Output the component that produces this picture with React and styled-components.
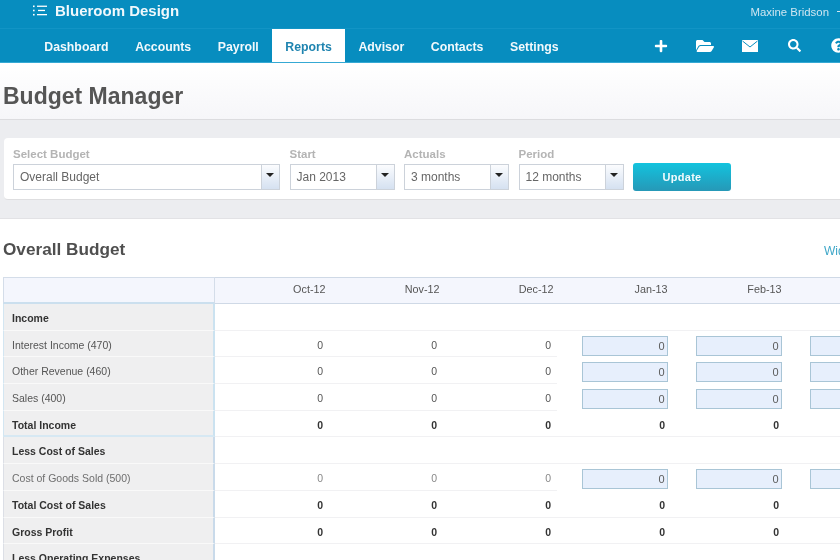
import React from 'react';
import styled, { createGlobalStyle } from 'styled-components';
import { FaPlus, FaFolderOpen, FaSearch, FaQuestionCircle } from 'react-icons/fa';

const GlobalStyle = createGlobalStyle`
  html, body {
    margin: 0;
    padding: 0;
    background: #fff;
    overflow: hidden;
  }
  body {
    font-family: "Liberation Sans", Arial, sans-serif;
  }
`;

const navItems = ['Dashboard', 'Accounts', 'Payroll', 'Reports', 'Advisor', 'Contacts', 'Settings'];
const months = ['Oct-12', 'Nov-12', 'Dec-12', 'Jan-13', 'Feb-13', 'Mar-13'];

const rows = [
  { label: 'Income', kind: 'heading', group: 'first' },
  { label: 'Interest Income (470)', kind: 'line', group: 'first' },
  { label: 'Other Revenue (460)', kind: 'line', group: 'first' },
  { label: 'Sales (400)', kind: 'line', group: 'first' },
  { label: 'Total Income', kind: 'total', group: 'last' },
  { label: 'Less Cost of Sales', kind: 'heading' },
  { label: 'Cost of Goods Sold (500)', kind: 'line', muted: true },
  { label: 'Total Cost of Sales', kind: 'total' },
  { label: 'Gross Profit', kind: 'total' },
  { label: 'Less Operating Expenses', kind: 'heading' },
];

function MailIcon() {
  return (
    <svg width="16" height="12" viewBox="0 0 16 12">
      <path d="M0 0h16v12H0z" fill="#fff" />
      <path d="M0.5 1l7.5 6 7.5-6" fill="none" stroke="#078dbf" strokeWidth="1" />
    </svg>
  );
}

function ListIcon() {
  return (
    <svg width="14" height="11" viewBox="0 0 14 11" fill="#fff">
      <rect x="0" y="0.5" width="1.6" height="1.6" />
      <rect x="0" y="4.7" width="1.6" height="1.6" />
      <rect x="0" y="8.9" width="1.6" height="1.6" />
      <rect x="4" y="0.6" width="10" height="1.3" />
      <rect x="5" y="4.8" width="7" height="1.3" />
      <rect x="4" y="9" width="10" height="1.3" />
    </svg>
  );
}

function SelectField({ label, value, width }) {
  return (
    <Field $width={width}>
      <FieldLabel>{label}</FieldLabel>
      <SelectBox>
        <SelectValue>{value}</SelectValue>
        <SelectArrow />
      </SelectBox>
    </Field>
  );
}

function BudgetRow({ row }) {
  const emphasised = row.kind !== 'line';
  return (
    <TableRow>
      <LabelCell $bold={emphasised} $muted={row.muted} $group={row.group}>
        {row.label}
      </LabelCell>
      {months.map((month, i) => {
        if (row.kind === 'heading') return <ValueCell key={month} />;
        if (row.kind === 'line' && i >= 3) {
          return (
            <InputCell key={month}>
              <AmountInput>0</AmountInput>
            </InputCell>
          );
        }
        return (
          <ValueCell key={month} $bold={emphasised} $muted={row.muted}>
            {i < 5 ? '0' : ''}
          </ValueCell>
        );
      })}
    </TableRow>
  );
}

export default function App() {
  return (
    <Page>
      <GlobalStyle />
      <TopBar>
        <BrandRow>
          <Brand>
            <ListIcon />
            <BrandName>Blueroom Design</BrandName>
          </Brand>
          <UserArea>
            <UserName>Maxine Bridson</UserName>
            <UserCaret />
          </UserArea>
        </BrandRow>
        <NavRow>
          {navItems.map((item) => (
            <NavItem key={item} $active={item === 'Reports'}>
              {item}
            </NavItem>
          ))}
          <NavIcons>
            <NavIcon><FaPlus size={14} /></NavIcon>
            <NavIcon><FaFolderOpen size={18} /></NavIcon>
            <NavIcon><MailIcon /></NavIcon>
            <NavIcon><FaSearch size={13} /></NavIcon>
            <NavIcon><FaQuestionCircle size={15} /></NavIcon>
          </NavIcons>
        </NavRow>
      </TopBar>

      <PageHeader>
        <PageTitle>Budget Manager</PageTitle>
      </PageHeader>

      <FilterBand>
        <FilterCard>
          <SelectField label="Select Budget" value="Overall Budget" width={267} />
          <SelectField label="Start" value="Jan 2013" width={105} />
          <SelectField label="Actuals" value="3 months" width={105} />
          <SelectField label="Period" value="12 months" width={105} />
          <UpdateButton>Update</UpdateButton>
        </FilterCard>
      </FilterBand>

      <BudgetSection>
        <SectionHead>
          <SectionTitle>Overall Budget</SectionTitle>
          <WideLink>Wider view</WideLink>
        </SectionHead>
        <BudgetTable>
          <HeaderRow>
            <HeaderLabel />
            <HeaderMonths>
              {months.map((month) => (
                <MonthCell key={month}>{month}</MonthCell>
              ))}
            </HeaderMonths>
          </HeaderRow>
          {rows.map((row) => (
            <BudgetRow key={row.label} row={row} />
          ))}
        </BudgetTable>
      </BudgetSection>
    </Page>
  );
}

const Page = styled.div`
  width: 840px;
  height: 560px;
  overflow: hidden;
  background: #fff;
  filter: blur(0.5px);
`;

const TopBar = styled.header`
  background: #078dbf;
  border-bottom: 1px solid #35a9d4;
  height: 63px;
  box-sizing: border-box;
`;

const BrandRow = styled.div`
  height: 29px;
  display: flex;
  align-items: center;
  justify-content: space-between;
  padding-left: 33px;
  box-sizing: border-box;
  border-bottom: 1px solid #1294c5;
`;

const Brand = styled.div`
  display: flex;
  align-items: center;
  gap: 8px;
  margin-top: -7px;
`;

const BrandName = styled.span`
  color: #f0f8fc;
  font-size: 15px;
  font-weight: 700;
`;

const UserArea = styled.div`
  display: flex;
  align-items: center;
  gap: 8px;
  margin-top: -5px;
`;

const UserName = styled.span`
  color: #cfe6f1;
  font-size: 11.4px;
`;

const UserCaret = styled.span`
  width: 3px;
  height: 1px;
  background: #cfe6f1;
`;

const NavRow = styled.nav`
  display: flex;
  height: 33px;
  padding-left: 31px;
`;

const NavItem = styled.a`
  display: flex;
  align-items: center;
  padding: 2px 13.3px 0;
  font-size: 12.3px;
  font-weight: 700;
  color: ${(p) => (p.$active ? '#1f84b0' : '#f2f9fc')};
  background: ${(p) => (p.$active ? '#fff' : 'transparent')};
`;

const NavIcons = styled.div`
  display: flex;
  margin-left: 66.5px;
`;

const NavIcon = styled.span`
  width: 44.5px;
  flex: none;
  display: flex;
  align-items: center;
  justify-content: center;
  color: #fff;
`;

const PageHeader = styled.div`
  height: 57px;
  box-sizing: border-box;
  padding: 20px 0 0 3px;
  background: linear-gradient(#fff, #f6f6f9);
  border-bottom: 1px solid #dcdcdf;
`;

const PageTitle = styled.h1`
  margin: 0;
  font-size: 23px;
  line-height: 26px;
  font-weight: 700;
  color: #555;
`;

const FilterBand = styled.div`
  height: 99px;
  box-sizing: border-box;
  padding: 18px 0 0 4px;
  background: #ecedf0;
  border-bottom: 1px solid #e2e2e5;
`;

const FilterCard = styled.div`
  height: 62px;
  box-sizing: border-box;
  padding: 10px 9px 0;
  display: flex;
  align-items: flex-start;
  gap: 9.5px;
  background: #fff;
  border-radius: 4px 0 0 4px;
  border-bottom: 1px solid #dedee0;
`;

const Field = styled.div`
  width: ${(p) => p.$width}px;
  flex: none;
`;

const FieldLabel = styled.div`
  font-size: 11.5px;
  line-height: 13px;
  font-weight: 700;
  color: #b4b4b4;
  margin-bottom: 3px;
`;

const SelectBox = styled.div`
  height: 26px;
  box-sizing: border-box;
  display: flex;
  border: 1px solid #ccd2da;
  background: #fff;
`;

const SelectValue = styled.div`
  flex: 1;
  padding-left: 6px;
  font-size: 12px;
  line-height: 24px;
  color: #666;
`;

const SelectArrow = styled.div`
  width: 17px;
  position: relative;
  border-left: 1px solid #ccd2da;
  background: linear-gradient(#fbfcfe, #d5e1f1);

  &::after {
    content: '';
    position: absolute;
    top: 8px;
    left: 4px;
    border: 4px solid transparent;
    border-top: 4px solid #222;
    border-bottom: 0;
  }
`;

const UpdateButton = styled.button`
  width: 98px;
  height: 28px;
  flex: none;
  margin-top: 15px;
  border: 0;
  border-radius: 3px;
  background: linear-gradient(#13c3de, #2698b7);
  color: #f2fbfd;
  font-family: inherit;
  font-size: 11px;
  font-weight: 700;
  letter-spacing: 0.3px;
`;

const BudgetSection = styled.section`
  padding: 0 0 0 3px;
  background: #fff;
`;

const SectionHead = styled.div`
  height: 58px;
  display: flex;
  justify-content: space-between;
  box-sizing: border-box;
  padding-top: 19px;
`;

const SectionTitle = styled.h2`
  margin: 0;
  font-size: 17.2px;
  line-height: 22px;
  font-weight: 700;
  color: #4f4f4f;
`;

const WideLink = styled.a`
  flex: none;
  width: 16px;
  overflow: hidden;
  white-space: nowrap;
  font-size: 12px;
  line-height: 26px;
  color: #3fa7c8;
`;

const BudgetTable = styled.div`
  width: 900px;
`;

const HeaderRow = styled.div`
  display: flex;
  height: 27px;
`;

const HeaderLabel = styled.div`
  width: 212px;
  flex: none;
  box-sizing: border-box;
  background: #f4f6fd;
  border: 1px solid #d4dde9;
  border-bottom: 2px solid #cbdfee;
`;

const HeaderMonths = styled.div`
  flex: 1;
  display: flex;
  box-sizing: border-box;
  background: #f4f6fd;
  border-top: 1px solid #cfd9e6;
  border-bottom: 1px solid #cfd9e6;
`;

const MonthCell = styled.div`
  width: 114px;
  flex: none;
  box-sizing: border-box;
  padding-right: 3.5px;
  text-align: right;
  font-size: 10.8px;
  line-height: 23px;
  color: #555;
`;

const TableRow = styled.div`
  display: flex;
  height: 26.7px;
`;

const LabelCell = styled.div`
  width: 212px;
  flex: none;
  box-sizing: border-box;
  padding-left: 8px;
  background: #efeff0;
  border-left: 1px solid ${(p) => (p.$group ? '#d3e6f2' : '#dcdfe6')};
  border-right: 2px solid ${(p) => (p.$group ? '#cbe2f0' : '#c9daea')};
  border-bottom: ${(p) => (p.$group === 'last' ? '2px solid #d6e8f3' : '1px solid #f9f9f9')};
  font-size: 10.5px;
  line-height: 28px;
  font-weight: ${(p) => (p.$bold ? 700 : 400)};
  color: ${(p) => (p.$bold ? '#333' : p.$muted ? '#6e6e6e' : '#555')};
  white-space: nowrap;
`;

const ValueCell = styled.div`
  width: 114px;
  flex: none;
  box-sizing: border-box;
  padding-right: 6px;
  text-align: right;
  border-bottom: 1px solid #f1f1f3;
  font-size: 10.5px;
  line-height: 28px;
  font-weight: ${(p) => (p.$bold ? 700 : 400)};
  color: ${(p) => (p.$bold ? '#333' : p.$muted ? '#888' : '#555')};
`;

const InputCell = styled.div`
  width: 114px;
  flex: none;
  box-sizing: border-box;
  padding: 5px 3px 0 25px;
`;

const AmountInput = styled.div`
  height: 20px;
  box-sizing: border-box;
  padding-right: 2.5px;
  text-align: right;
  background: #e7effc;
  border: 1px solid #a9c5d6;
  font-size: 11px;
  line-height: 19px;
  color: #5c5c5c;
`;
